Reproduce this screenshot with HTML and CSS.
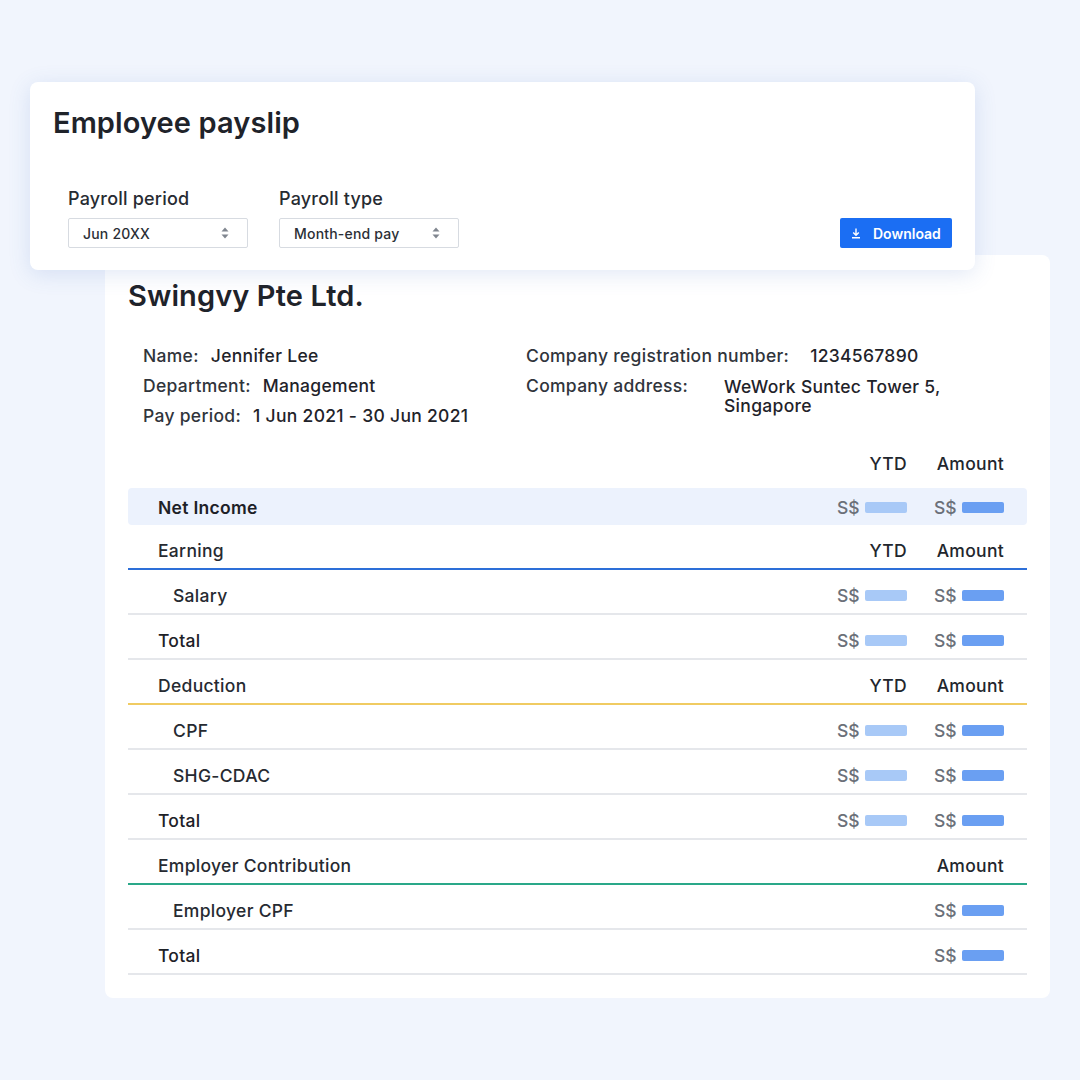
FILE: index.html
```html
<!DOCTYPE html>
<html>
<head>
<meta charset="utf-8">
<link rel="stylesheet" href="styles.css">
</head>
<body>
<div class="page">
  <div class="header-card">
    <h1 class="title">Employee payslip</h1>
    <div class="controls">
      <div class="fields">
        <div class="field">
          <div class="field-label">Payroll period</div>
          <div class="select select-period">
            <span>Jun 20XX</span>
            <svg class="updown" width="8" height="12" viewBox="0 0 8 12"><path d="M4 0.5L7.5 4.5H0.5Z M4 11.5L0.5 7.5H7.5Z" fill="#80868f"/></svg>
          </div>
        </div>
        <div class="field">
          <div class="field-label">Payroll type</div>
          <div class="select">
            <span>Month-end pay</span>
            <svg class="updown" width="8" height="12" viewBox="0 0 8 12"><path d="M4 0.5L7.5 4.5H0.5Z M4 11.5L0.5 7.5H7.5Z" fill="#80868f"/></svg>
          </div>
        </div>
      </div>
      <button class="download">
        <svg width="10" height="12" viewBox="0 0 10 12"><path d="M5 1.5V8M2.2 5.4L5 8.2L7.8 5.4M1 10.8H9" stroke="#fff" stroke-width="1.4" fill="none"/></svg>
        <span>Download</span>
      </button>
    </div>
  </div>

  <div class="payslip">
    <h2 class="company">Swingvy Pte Ltd.</h2>
    <div class="info">
      <div class="info-col left">
        <div class="info-row"><span class="lbl">Name:</span><span class="val">Jennifer Lee</span></div>
        <div class="info-row"><span class="lbl">Department:</span><span class="val">Management</span></div>
        <div class="info-row"><span class="lbl">Pay period:</span><span class="val">1 Jun 2021 - 30 Jun 2021</span></div>
      </div>
      <div class="info-col right">
        <div class="info-row"><span class="lbl">Company registration number:</span><span class="val reg">1234567890</span></div>
        <div class="info-row"><span class="lbl addr-lbl">Company address:</span><span class="val addr">WeWork Suntec Tower 5,<br>Singapore</span></div>
      </div>
    </div>

    <div class="table">
      <div class="row head-row">
        <div class="name"></div>
        <div class="cell">YTD</div>
        <div class="cell">Amount</div>
      </div>
      <div class="row net">
        <div class="name strong">Net Income</div>
        <div class="cell"><span class="cur">S$</span><span class="bar ytd"></span></div>
        <div class="cell"><span class="cur">S$</span><span class="bar amt"></span></div>
      </div>

      <div class="row section earning">
        <div class="name">Earning</div>
        <div class="cell">YTD</div>
        <div class="cell">Amount</div>
      </div>
      <div class="row item">
        <div class="name sub">Salary</div>
        <div class="cell"><span class="cur">S$</span><span class="bar ytd"></span></div>
        <div class="cell"><span class="cur">S$</span><span class="bar amt"></span></div>
      </div>
      <div class="row item">
        <div class="name strong">Total</div>
        <div class="cell"><span class="cur">S$</span><span class="bar ytd"></span></div>
        <div class="cell"><span class="cur">S$</span><span class="bar amt"></span></div>
      </div>

      <div class="row section deduction">
        <div class="name">Deduction</div>
        <div class="cell">YTD</div>
        <div class="cell">Amount</div>
      </div>
      <div class="row item">
        <div class="name sub">CPF</div>
        <div class="cell"><span class="cur">S$</span><span class="bar ytd"></span></div>
        <div class="cell"><span class="cur">S$</span><span class="bar amt"></span></div>
      </div>
      <div class="row item">
        <div class="name sub">SHG-CDAC</div>
        <div class="cell"><span class="cur">S$</span><span class="bar ytd"></span></div>
        <div class="cell"><span class="cur">S$</span><span class="bar amt"></span></div>
      </div>
      <div class="row item">
        <div class="name strong">Total</div>
        <div class="cell"><span class="cur">S$</span><span class="bar ytd"></span></div>
        <div class="cell"><span class="cur">S$</span><span class="bar amt"></span></div>
      </div>

      <div class="row section employer">
        <div class="name">Employer Contribution</div>
        <div class="cell"></div>
        <div class="cell">Amount</div>
      </div>
      <div class="row item">
        <div class="name sub">Employer CPF</div>
        <div class="cell"></div>
        <div class="cell"><span class="cur">S$</span><span class="bar amt"></span></div>
      </div>
      <div class="row item">
        <div class="name strong">Total</div>
        <div class="cell"></div>
        <div class="cell"><span class="cur">S$</span><span class="bar amt"></span></div>
      </div>
    </div>
  </div>
</div>
</body>
</html>
```

FILE: styles.css
```css
* { box-sizing: border-box; }

html, body {
  margin: 0;
  padding: 0;
  background: #f1f5fd;
}

body {
  font-family: Inter, "Open Sans", "Liberation Sans", sans-serif;
  color: #22262d;
}

.page {
  width: 1080px;
  height: 1080px;
  padding: 82px 0 0 30px;
}

.header-card {
  position: relative;
  z-index: 2;
  width: 945px;
  height: 188px;
  background: #ffffff;
  border-radius: 8px;
  box-shadow: 0 4px 22px rgba(70, 110, 190, 0.16);
  padding: 23px 23px 22px 23px;
  display: flex;
  flex-direction: column;
  justify-content: space-between;
}

.title {
  margin: 0;
  font-size: 29px;
  line-height: 36px;
  font-weight: 600;
  letter-spacing: 0.1px;
  color: #1f232a;
}

.controls {
  display: flex;
  align-items: flex-end;
  justify-content: space-between;
}

.fields {
  display: flex;
  gap: 31px;
  padding-left: 15px;
}

.field-label {
  font-size: 18px;
  line-height: 22px;
  font-weight: 500;
  letter-spacing: 0.2px;
  color: #272b32;
  margin-bottom: 8px;
}

.select {
  width: 180px;
  height: 30px;
  border: 1px solid #d7dbe1;
  border-radius: 2px;
  display: flex;
  align-items: center;
  justify-content: space-between;
  padding: 0 18px 0 14px;
  font-size: 14px;
  font-weight: 500;
  letter-spacing: 0.2px;
  color: #2b2f36;
}

.download {
  width: 112px;
  height: 30px;
  border: none;
  border-radius: 2px;
  background: #1b6ef3;
  color: #ffffff;
  font-family: inherit;
  font-size: 14px;
  font-weight: 600;
  display: flex;
  align-items: center;
  gap: 12px;
  padding: 0 0 0 11px;
}

.payslip {
  position: relative;
  z-index: 1;
  width: 945px;
  margin: -15px 0 0 75px;
  background: #ffffff;
  border-radius: 8px;
  padding: 24px 23px 23px 23px;
}

.company {
  margin: 0;
  font-size: 29px;
  line-height: 34px;
  font-weight: 600;
  letter-spacing: 0.1px;
  color: #1f232a;
}

.info {
  display: flex;
  margin-top: 28px;
  padding-left: 15px;
  font-size: 17.5px;
  line-height: 30px;
  font-weight: 500;
  letter-spacing: 0.3px;
}

.info-col.left { width: 383px; }

.info-row { display: flex; }

.lbl { color: #30343b; margin-right: 12px; }
.val { color: #1f232a; }
.reg { margin-left: 9px; }
.addr-lbl { width: 198px; margin-right: 0; }
.addr { line-height: 19px; padding-top: 6px; }

.table {
  margin-top: 8px;
  font-size: 17.5px;
  font-weight: 500;
  letter-spacing: 0.3px;
}

.row {
  display: flex;
  align-items: center;
  height: 45px;
  padding: 7px 23px 0 30px;
}

.row .name { flex: 1; color: #262a31; }
.row .name.sub { padding-left: 15px; }
.row .name.strong { color: #1d2127; }

.cell {
  width: 70px;
  display: flex;
  align-items: center;
  justify-content: flex-end;
  color: #22262d;
}

.cell + .cell { margin-left: 27px; }

.head-row { height: 45px; padding-top: 3px; margin-bottom: 4px; }

.net {
  height: 37px;
  padding-top: 1px;
  background: #ecf2fd;
  border-radius: 4px;
}

.net .name { font-weight: 600; }

.section { border-bottom: 2px solid #e4e6ea; }
.earning { border-bottom-color: #2d6fd8; }
.deduction { border-bottom-color: #f0cb62; }
.employer { border-bottom-color: #2aa889; }

.item { border-bottom: 2px solid #e5e7eb; }

.cur {
  color: #6b7079;
  font-weight: 500;
  letter-spacing: 0;
  margin-right: 5px;
}

.bar {
  display: inline-block;
  width: 44px;
  height: 11px;
  border-radius: 2px;
}

.bar.ytd { background: #a8c9f7; }
.bar.amt { background: #6a9ff2; }
```
